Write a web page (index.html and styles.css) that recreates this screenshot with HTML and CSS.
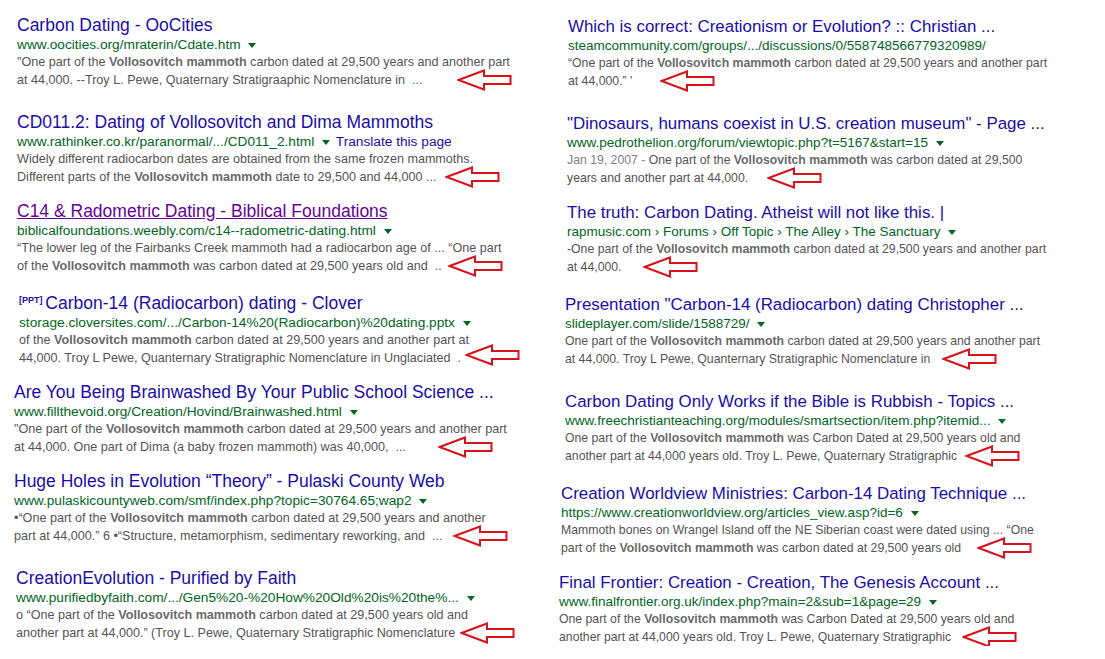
FILE: index.html
```html
<!DOCTYPE html>
<html>
<head>
    <title>Vollosovitch mammoth - search results</title>
    <link rel="stylesheet" href="styles.css">
</head>
<body>

<svg width="0" height="0" class="defs">
    <symbol id="arrow" viewBox="0 0 55 22">
        <polygon points="1.5,11 27,1.5 27,7 53.5,7 53.5,15 27,15 27,20.5" fill="none" stroke="#d8121c" stroke-width="2"/>
    </symbol>
</svg>

<div class="page">
    <div class="column left">
        <div class="result">
            <a class="title" href="#">Carbon Dating - OoCities</a>
            <div class="url">www.oocities.org/mraterin/Cdate.htm <span class="caret"></span></div>
            <div class="snippet">"One part of the <b>Vollosovitch mammoth</b> carbon dated at 29,500 years and another part<br>at 44,000. --Troy L. Pewe, Quaternary Stratigraaphic Nomenclature in &nbsp;...</div>
            <svg class="arrow" style="left: 440px"><use href="#arrow"/></svg>
        </div>

        <div class="result gap-l">
            <a class="title" href="#">CD011.2: Dating of Vollosovitch and Dima Mammoths</a>
            <div class="url">www.rathinker.co.kr/paranormal/.../CD011_2.html <span class="caret"></span> <a class="translate" href="#">Translate this page</a></div>
            <div class="snippet">Widely different radiocarbon dates are obtained from the same frozen mammoths.<br>Different parts of the <b>Vollosovitch mammoth</b> date to 29,500 and 44,000 ...</div>
            <svg class="arrow" style="left: 428px"><use href="#arrow"/></svg>
        </div>

        <div class="result gap-s">
            <a class="title visited" href="#">C14 &amp; Radometric Dating - Biblical Foundations</a>
            <div class="url">biblicalfoundations.weebly.com/c14--radometric-dating.html <span class="caret"></span></div>
            <div class="snippet">“The lower leg of the Fairbanks Creek mammoth had a radiocarbon age of ... “One part<br>of the <b>Vollosovitch mammoth</b> was carbon dated at 29,500 years old and &nbsp;..</div>
            <svg class="arrow" style="left: 431px"><use href="#arrow"/></svg>
        </div>

        <div class="result gap-s dx-p2">
            <a class="title" href="#"><span class="filetype">[PPT]</span> Carbon-14 (Radiocarbon) dating - Clover</a>
            <div class="url">storage.cloversites.com/.../Carbon-14%20(Radiocarbon)%20dating.pptx <span class="caret"></span></div>
            <div class="snippet">of the <b>Vollosovitch mammoth</b> carbon dated at 29,500 years and another part at<br>44,000. Troy L Pewe, Quanternary Stratigraphic Nomenclature in Unglaciated &nbsp;.</div>
            <svg class="arrow" style="left: 446px"><use href="#arrow"/></svg>
        </div>

        <div class="result gap-m dx-m3">
            <a class="title" href="#">Are You Being Brainwashed By Your Public School Science ...</a>
            <div class="url">www.fillthevoid.org/Creation/Hovind/Brainwashed.html <span class="caret"></span></div>
            <div class="snippet">"One part of the <b>Vollosovitch mammoth</b> carbon dated at 29,500 years and another part<br>at 44,000. One part of Dima (a baby frozen mammoth) was 40,000, &nbsp;...</div>
            <svg class="arrow" style="left: 424px"><use href="#arrow"/></svg>
        </div>

        <div class="result gap-s dx-m3">
            <a class="title" href="#">Huge Holes in Evolution “Theory” - Pulaski County Web</a>
            <div class="url">www.pulaskicountyweb.com/smf/index.php?topic=30764.65;wap2 <span class="caret"></span></div>
            <div class="snippet">•“One part of the <b>Vollosovitch mammoth</b> carbon dated at 29,500 years and another<br>part at 44,000.” 6 •“Structure, metamorphism, sedimentary reworking, and &nbsp;...</div>
            <svg class="arrow" style="left: 439px"><use href="#arrow"/></svg>
        </div>

        <div class="result gap-l dx-m1">
            <a class="title" href="#">CreationEvolution - Purified by Faith</a>
            <div class="url">www.purifiedbyfaith.com/.../Gen5%20-%20How%20Old%20is%20the%... <span class="caret"></span></div>
            <div class="snippet">o “One part of the <b>Vollosovitch mammoth</b> carbon dated at 29,500 years old and<br>another part at 44,000.” (Troy L. Pewe, Quaternary Stratigraphic Nomenclature</div>
            <svg class="arrow" style="left: 444px"><use href="#arrow"/></svg>
        </div>
    </div>

    <div class="column right">
        <div class="result dx-p1">
            <a class="title" href="#">Which is correct: Creationism or Evolution? :: Christian ...</a>
            <div class="url">steamcommunity.com/groups/.../discussions/0/558748566779320989/</div>
            <div class="snippet">“One part of the <b>Vollosovitch mammoth</b> carbon dated at 29,500 years and another part<br>at 44,000.” '</div>
            <svg class="arrow" style="left: 92px"><use href="#arrow"/></svg>
        </div>

        <div class="result gap-l">
            <a class="title" href="#">"Dinosaurs, humans coexist in U.S. creation museum" - Page ...</a>
            <div class="url">www.pedrothelion.org/forum/viewtopic.php?t=5167&amp;start=15 <span class="caret"></span></div>
            <div class="snippet"><span class="date">Jan 19, 2007 - </span>One part of the <b>Vollosovitch mammoth</b> was carbon dated at 29,500<br>years and another part at 44,000.</div>
            <svg class="arrow" style="left: 200px"><use href="#arrow"/></svg>
        </div>

        <div class="result gap-s">
            <a class="title" href="#">The truth: Carbon Dating. Atheist will not like this. |</a>
            <div class="url">rapmusic.com › Forums › Off Topic › The Alley › The Sanctuary <span class="caret"></span></div>
            <div class="snippet">-One part of the <b>Vollosovitch mammoth</b> carbon dated at 29,500 years and another part<br>at 44,000.</div>
            <svg class="arrow" style="left: 76px"><use href="#arrow"/></svg>
        </div>

        <div class="result gap-m dx-m2">
            <a class="title" href="#">Presentation "Carbon-14 (Radiocarbon) dating Christopher ...</a>
            <div class="url">slideplayer.com/slide/1588729/ <span class="caret"></span></div>
            <div class="snippet">One part of the <b>Vollosovitch mammoth</b> carbon dated at 29,500 years and another part<br>at 44,000. Troy L Pewe, Quanternary Stratigraphic Nomenclature in</div>
            <svg class="arrow" style="left: 377px"><use href="#arrow"/></svg>
        </div>

        <div class="result gap-l dx-m2">
            <a class="title" href="#">Carbon Dating Only Works if the Bible is Rubbish - Topics ...</a>
            <div class="url">www.freechristianteaching.org/modules/smartsection/item.php?itemid... <span class="caret"></span></div>
            <div class="snippet">One part of the <b>Vollosovitch mammoth</b> was Carbon Dated at 29,500 years old and<br>another part at 44,000 years old. Troy L. Pewe, Quaternary Stratigraphic</div>
            <svg class="arrow" style="left: 400px"><use href="#arrow"/></svg>
        </div>

        <div class="result gap-m dx-m6">
            <a class="title" href="#">Creation Worldview Ministries: Carbon-14 Dating Technique ...</a>
            <div class="url">https://www.creationworldview.org/articles_view.asp?id=6 <span class="caret"></span></div>
            <div class="snippet">Mammoth bones on Wrangel Island off the NE Siberian coast were dated using ... “One<br>part of the <b>Vollosovitch mammoth</b> was carbon dated at 29,500 years old</div>
            <svg class="arrow" style="left: 416px"><use href="#arrow"/></svg>
        </div>

        <div class="result gap-s dx-m8">
            <a class="title" href="#">Final Frontier: Creation - Creation, The Genesis Account ...</a>
            <div class="url">www.finalfrontier.org.uk/index.php?main=2&amp;sub=1&amp;page=29 <span class="caret"></span></div>
            <div class="snippet">One part of the <b>Vollosovitch mammoth</b> was Carbon Dated at 29,500 years old and<br>another part at 44,000 years old. Troy L. Pewe, Quaternary Stratigraphic</div>
            <svg class="arrow" style="left: 403px"><use href="#arrow"/></svg>
        </div>
    </div>
</div>

</body>
</html>
```

FILE: styles.css
```css
body {
    margin: 0;
    background-color: #fff;
    font-family: "Liberation Sans", Arial, sans-serif;
}

.defs {
    position: absolute;
}

.page {
    display: grid;
    grid-template-columns: 550px 555px;
}

.column {
    padding: 15px 0 0 17px;
}

.column.right {
    padding-top: 16px;
}

.result {
    position: relative;
    height: 74px;
    white-space: nowrap;
}

.gap-s { margin-top: 15px; }
.gap-m { margin-top: 18px; }
.gap-l { margin-top: 23px; }

.dx-p2 { margin-left: 2px; }
.dx-p1 { margin-left: 1px; }
.dx-m1 { margin-left: -1px; }
.dx-m2 { margin-left: -2px; }
.dx-m3 { margin-left: -3px; }
.dx-m6 { margin-left: -6px; }
.dx-m8 { margin-left: -8px; }

.title {
    display: block;
    font-size: 17.5px;
    line-height: 21px;
    color: #1a0dab;
    text-decoration: none;
}

.right .title {
    font-size: 16.9px;
}

.title.visited {
    color: #609;
    text-decoration: underline;
}

.filetype {
    font-size: 9px;
    font-weight: bold;
    color: #1a0dab;
    vertical-align: 6px;
    margin-right: -2px;
}

.url {
    font-size: 13.7px;
    line-height: 17px;
    color: #006621;
}

.right .url {
    font-size: 13.5px;
}

.caret {
    display: inline-block;
    width: 0;
    height: 0;
    margin-left: 4px;
    border-top: 5px solid #006621;
    border-left: 4px solid transparent;
    border-right: 4px solid transparent;
    vertical-align: middle;
}

.translate {
    color: #1a0dab;
    text-decoration: none;
    margin-left: 2px;
}

.snippet {
    font-size: 12.6px;
    line-height: 18px;
    color: #545454;
}

.right .snippet {
    font-size: 12.25px;
}

.snippet b {
    color: #6a6a6a;
}

.date {
    color: #808080;
}

.arrow {
    position: absolute;
    top: 54px;
    width: 55px;
    height: 22px;
}
```
